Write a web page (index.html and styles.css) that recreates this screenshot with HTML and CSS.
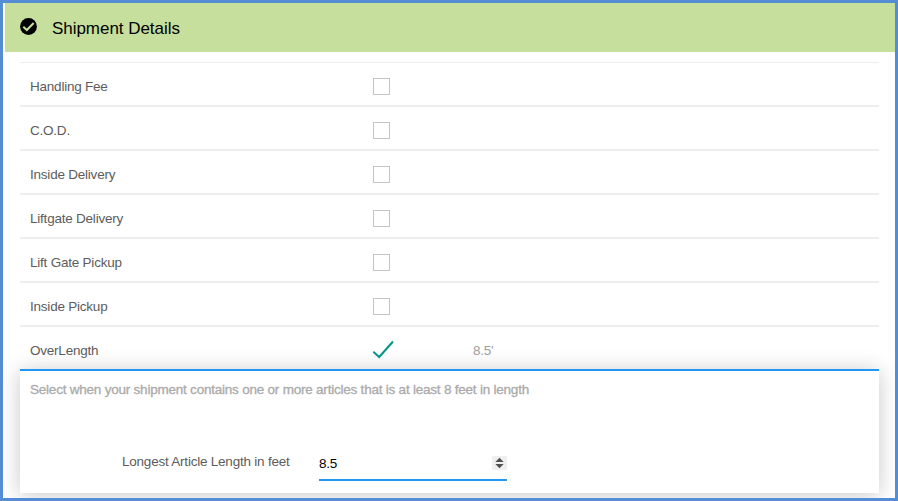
FILE: index.html
```html
<!DOCTYPE html>
<html lang="en">
<head>
<meta charset="utf-8">
<title>Shipment Details</title>
<link rel="stylesheet" href="styles.css">
</head>
<body>
<main class="frame">
  <header class="header">
    <svg class="badge" viewBox="0 0 17 17"><circle cx="8.5" cy="8.5" r="8.4"/><path d="M3.3 8.8 6.8 12 13.7 5"/></svg>
    <h1>Shipment Details</h1>
  </header>
  <section class="options">
    <label class="row"><span>Handling Fee</span><i class="box"></i></label>
    <label class="row"><span>C.O.D.</span><i class="box"></i></label>
    <label class="row"><span>Inside Delivery</span><i class="box"></i></label>
    <label class="row"><span>Liftgate Delivery</span><i class="box"></i></label>
    <label class="row"><span>Lift Gate Pickup</span><i class="box"></i></label>
    <label class="row"><span>Inside Pickup</span><i class="box"></i></label>
    <div class="row open"><span>OverLength</span><svg class="tick" viewBox="0 0 22 20"><path d="M.3 11.7 6.2 17 20 1.5"/></svg><span class="value">8.5'</span></div>
  </section>
  <section class="panel">
    <p class="hint">Select when your shipment contains one or more articles that is at least 8 feet in length</p>
    <div class="field">
      <span class="caption">Longest Article Length in feet</span>
      <div class="input"><span>8.5</span><svg class="spinner" viewBox="0 0 15 14"><path d="M3.3 6 7.5 1.8 11.7 6ZM3.3 8 7.5 12.2 11.7 8Z"/></svg></div>
    </div>
  </section>
</main>
</body>
</html>
```

FILE: styles.css
```css
* { box-sizing: border-box; }
body {
  margin: 0;
  font: 13.5px/16px "Liberation Sans", Arial, sans-serif;
  letter-spacing: -.22px;
  color: #5c5c5c;
}
.frame {
  width: 898px;
  height: 501px;
  border: 3px solid #548dd4;
  background: #fff;
  overflow: hidden;
}
.header {
  display: flex;
  align-items: center;
  height: 49px;
  margin-left: 2px;
  padding-left: 15px;
  background: #c6df9c;
  color: #000;
}
.badge { width: 17px; height: 17px; margin-top: -2px; }
.badge path { fill: none; stroke: #c6df9c; stroke-width: 2; }
h1 {
  margin: 3px 0 0 15px;
  font-size: 17px;
  line-height: 20px;
  font-weight: 400;
  letter-spacing: -.04px;
}
.options {
  margin: 10px 16px 0 17px;
  border-top: 1px solid #eee;
}
.row {
  display: grid;
  grid-template-columns: 343px 100px auto;
  align-items: center;
  height: 44px;
  padding: 4px 0 0 10px;
  border-bottom: 2px solid #eee;
}
.row span { padding-top: 1px; }
.open { height: 42px; border-bottom: 0; }
.box { width: 17px; height: 17px; border: 1px solid #c4c4c4; }
.tick { width: 22px; height: 20px; }
.tick path { fill: none; stroke: #009688; stroke-width: 2; }
.value { color: #9e9e9e; }
.panel {
  height: 124px;
  margin: 0 16px 0 17px;
  padding: 11px 10px 0;
  border-top: 2px solid #2196f3;
  background: #fff;
  box-shadow: 0 2px 20px rgba(0, 0, 0, .22);
}
.hint { margin: 0; color: #aaa; -webkit-text-stroke: .3px #aaa; }
.field { display: flex; margin-top: 53px; }
.caption { flex: none; width: 289px; padding: 3px 0 0 92px; white-space: nowrap; }
.input {
  display: flex;
  justify-content: space-between;
  width: 188px;
  height: 30px;
  padding-top: 5px;
  border-bottom: 2px solid #2196f3;
  color: #000;
}
.spinner { width: 15px; height: 14px; background: #efefef; fill: #505050; }
```
